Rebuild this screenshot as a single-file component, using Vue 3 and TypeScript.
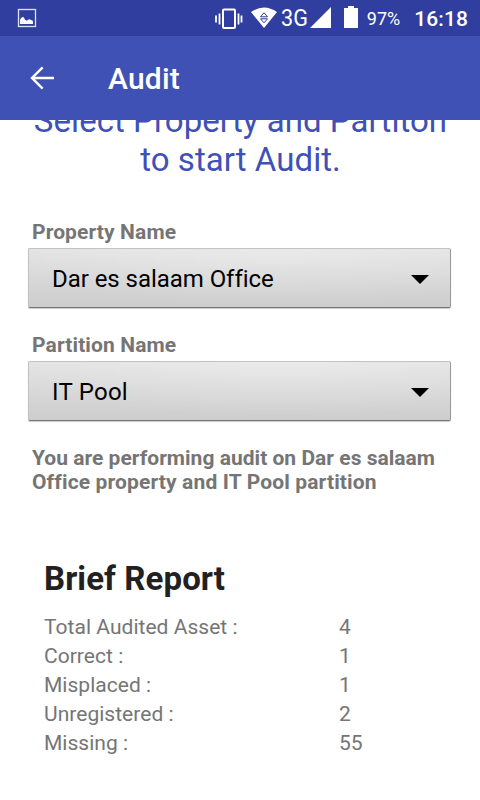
<script setup lang="ts">
import { ref } from 'vue'

interface ReportRow { label: string; value: number }

const fields = ref([
  { label: 'Property Name', value: 'Dar es salaam Office', short: false },
  { label: 'Partition Name', value: 'IT Pool', short: true },
])
const rows: ReportRow[] = [
  { label: 'Total Audited Asset :', value: 4 },
  { label: 'Correct :', value: 1 },
  { label: 'Misplaced :', value: 1 },
  { label: 'Unregistered :', value: 2 },
  { label: 'Missing :', value: 55 },
]
</script>

<template>
  <div class="screen">
    <header class="status">
      <svg class="picture" width="20" height="20" viewBox="0 0 20 20"><rect x="1.500" y="1.500" width="17" height="17" fill="none" stroke="#e0e2f2" stroke-width="1.300" /><path d="M3 16v-4l1-2 1-.5 1-.8 1 1 1 2 2 1 1-1 2-.5 1 1h1l1 1v2.800z" fill="#fff" /></svg>
      <div class="indicators">
        <svg class="vibrate" width="28" height="22" viewBox="0 0 28 22"><path d="M1 7.500v7M4.500 5.500v11M23.500 5.500v11M26.500 7.500v7" stroke="#fff" stroke-width="1.800" /><rect x="8" y="1.500" width="12" height="18.500" rx="1" fill="none" stroke="#fff" stroke-width="2" /></svg>
        <svg class="wifi" width="26" height="22" viewBox="0 0 26 22"><path d="M0 5Q13-4 26 5L13 21z" fill="#fff" /><path d="M9.500 9.800l3.500-4.100 3.500 4.100zM9.500 11.800h7L13 15.800z" fill="#fff" stroke="#303f9f" stroke-width="1" /></svg>
        <span class="network">3G</span>
        <svg class="signal" width="21" height="21" viewBox="0 0 21 21"><path d="M21 0v21H0z" fill="#fff" /></svg>
        <svg class="battery" width="14" height="22" viewBox="0 0 14 22"><path d="M4 0h6v2h4v20H0V2h4z" fill="#fff" /></svg>
        <span class="percent">97%</span>
        <time class="clock">16:18</time>
      </div>
    </header>
    <nav class="toolbar">
      <svg class="back" width="24" height="24" viewBox="0 0 24 24"><path d="M24 10.700H5L13.500 2.200 11.800.5.300 12l11.500 11.500 1.700-1.700L5 13.300h19z" fill="#fff" /></svg>
      <h1>Audit</h1>
    </nav>
    <main>
      <h2><span>Select Property and Partiton</span><br><span>to start Audit.</span></h2>
      <section v-for="field in fields" :key="field.label" class="field">
        <label>{{ field.label }}</label>
        <button type="button"><span :class="{ short: field.short }">{{ field.value }}</span><svg width="18" height="9" viewBox="0 0 18 9"><path d="M0 0h18L9 9z" /></svg></button>
      </section>
      <p class="notice">You are performing audit on Dar es salaam<br><span class="second">Office property and IT Pool partition</span></p>
      <section class="report">
        <h3>Brief Report</h3>
        <dl><div v-for="row in rows" :key="row.label"><dt>{{ row.label }}</dt><dd>{{ row.value }}</dd></div></dl>
      </section>
    </main>
  </div>
</template>

<style>
body { margin: 0; }
</style>
<style scoped>
* { box-sizing: border-box; margin: 0; padding: 0; }
.screen { width: 480px; height: 800px; overflow: hidden; display: flex; flex-direction: column; background: #fff; font-family: Roboto, sans-serif; font-variant-ligatures: none; }
.status { height: 36px; flex: none; background: #303f9f; color: #fff; display: flex; justify-content: space-between; align-items: center; padding: 0 12px 0 17px; }
.indicators { display: flex; align-items: center; }
.vibrate { margin-top: 1px; }
.wifi { margin-left: 8px; }
.network { font-size: 24px; line-height: 28px; width: 27px; margin-left: 4px; transform: scaleX(.9); transform-origin: left; white-space: nowrap; }
.signal { margin-left: 2px; margin-top: -1px; }
.battery { margin-left: 13px; margin-top: -2px; }
.percent { font-size: 18px; line-height: 22px; margin: 2px 0 0 9px; }
.clock { font-size: 21px; line-height: 25px; font-weight: 500; margin: 2px 0 0 14px; letter-spacing: .1px; }
.toolbar { height: 84px; flex: none; background: #3f51b5; color: #fff; display: flex; align-items: center; padding-left: 30px; }
h1 { font-size: 30px; font-weight: 500; margin-left: 54px; letter-spacing: .2px; }
main { flex: 1; overflow: hidden; padding: 0 29px 0 28px; }
h2 { font-size: 33px; font-weight: 400; line-height: 39px; text-align: center; color: #3f51b5; margin: -19px -2px 41px 0; white-space: nowrap; letter-spacing: .05px; }
.field { height: 113px; color: #757575; }
label { display: block; font-size: 21px; line-height: 25px; font-weight: 700; padding-left: 4px; margin-bottom: 3px; letter-spacing: .12px; }
button { width: 423px; height: 60px; border: 1px solid #c2c2c2; border-right-color: #999; border-bottom-color: #747474; border-radius: 2px; box-shadow: 0 1px 1px #0003; background: radial-gradient(ellipse 300px 55px at 60% 0, #fff4, transparent), linear-gradient(#e3e3e3, #cdcdcd); display: flex; align-items: center; justify-content: space-between; padding: 2px 21px 0 23px; font: 400 24px/28px Roboto, sans-serif; font-variant-ligatures: none; letter-spacing: -.05px; color: #000; }
.short { letter-spacing: .25px; }
.notice { font-size: 21px; line-height: 24px; font-weight: 700; color: #757575; padding-left: 4px; white-space: nowrap; letter-spacing: .02px; }
.second { letter-spacing: .14px; }
.report { padding: 65px 16px 0; }
h3 { font-size: 33px; line-height: 39px; font-weight: 700; color: #212121; letter-spacing: .1px; }
dl { margin-top: 15px; font-size: 21px; line-height: 29px; color: #757575; letter-spacing: .03px; }
dl div { display: grid; grid-template-columns: 295px 1fr; }
</style>
